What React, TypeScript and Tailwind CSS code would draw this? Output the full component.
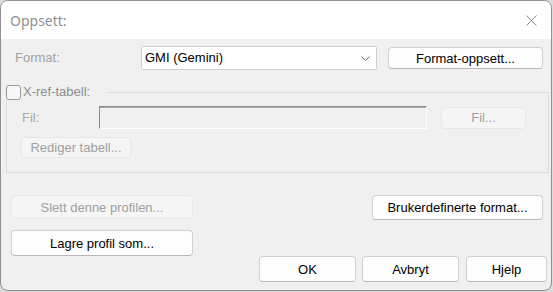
import React from 'react';

const font = { fontFamily: '"Liberation Sans", Arial, sans-serif' };

interface BtnProps {
  label: string;
  disabled?: boolean;
  className?: string;
}

const Btn: React.FC<BtnProps> = ({ label, disabled, className }) => (
  <button
    disabled={disabled}
    className={
      'flex items-center justify-center rounded-[4px] border text-[13px] leading-none ' +
      (disabled
        ? 'bg-[#f5f5f5] border-[#e6e6e6] text-[#a0a0a0] '
        : 'bg-[#fdfdfd] border-[#d0d0d0] border-b-[#b8b8b8] text-black ') +
      (className || '')
    }
  >
    {label}
  </button>
);

export default function App() {
  return (
    <div className="w-[553px] h-[292px] bg-[#dcdcdc]" style={font}>
      <div className="w-[552px] h-[291px] rounded-[8px] border border-[#8e8e8e] overflow-hidden flex flex-col bg-[#f0f0f0]">
        {/* title bar */}
        <div className="h-[38px] bg-white flex items-center justify-between pl-[9px] pr-[14px] shrink-0">
          <span
            className="text-[14px] text-[#8f8f8f]"
            style={{ fontFamily: '"Noto Sans", "Open Sans", sans-serif' }}
          >
            Oppsett:
          </span>
          <svg width="11" height="11" viewBox="0 0 11 11" className="mt-[1px]">
            <path d="M0.5 0.5 L10.5 10.5 M10.5 0.5 L0.5 10.5" stroke="#8a8a8a" strokeWidth="1" fill="none" />
          </svg>
        </div>

        {/* body */}
        <div className="flex-1 flex flex-col">
          {/* format row */}
          <div className="mt-[7px] flex items-center h-[24px] pl-[14px]">
            <span className="w-[126px] text-[13px] text-[#a0a0a0]">Format:</span>
            <div className="w-[236px] h-[24px] bg-white border border-[#cfcfcf] rounded-[2px] flex items-center justify-between pl-[3px] pr-[6px]">
              <span className="text-[13px] text-black">GMI (Gemini)</span>
              <svg width="9" height="5" viewBox="0 0 9 5">
                <path d="M0.5 0.5 L4.5 4.5 L8.5 0.5" stroke="#6e6e6e" strokeWidth="1" fill="none" />
              </svg>
            </div>
            <Btn label="Format-oppsett..." className="ml-[11px] w-[155px] h-[22px]" />
          </div>

          {/* x-ref group */}
          <fieldset className="mt-[14px] ml-[5px] w-[543px] border border-[#dcdcdc] pb-[14px]">
            <legend className="-ml-px flex items-center pr-[18px] h-[16px]">
              <span className="w-[15px] h-[15px] rounded-[3px] border border-[#9a9a9a] bg-[#f7f7f7]" />
              <span className="ml-[2px] text-[13px] text-[#8e8e8e]">X-ref-tabell:</span>
            </legend>
            <div className="mt-[6px] flex items-center pl-[15px]">
              <span className="w-[77px] text-[13px] text-[#a8a8a8]">Fil:</span>
              <div className="w-[328px] h-[23px] border border-[#8a8a8a] border-r-white border-b-white shadow-[inset_0_1px_0_#a8a8a8] bg-[#f0f0f0]" />
              <Btn label="Fil..." disabled className="ml-[14px] w-[85px] h-[22px]" />
            </div>
            <Btn label="Rediger tabell..." disabled className="mt-[8px] ml-[14px] w-[110px] h-[21px]" />
          </fieldset>

          {/* bottom area */}
          <div className="mt-[22px] flex">
            <div className="ml-[10px] flex flex-col">
              <Btn label="Slett denne profilen..." disabled className="w-[182px] h-[24px]" />
              <Btn label="Lagre profil som..." className="mt-[11px] w-[182px] h-[26px]" />
            </div>
            <div className="ml-auto mr-[4px] flex flex-col items-end">
              <Btn label="Brukerdefinerte format..." className="mr-[4px] w-[171px] h-[25px]" />
              <div className="mt-[36px] flex">
                <Btn label="OK" className="w-[97px] h-[26px]" />
                <Btn label="Avbryt" className="ml-[6px] w-[97px] h-[26px]" />
                <Btn label="Hjelp" className="ml-[7px] w-[81px] h-[26px]" />
              </div>
            </div>
          </div>
        </div>
      </div>
    </div>
  );
}
